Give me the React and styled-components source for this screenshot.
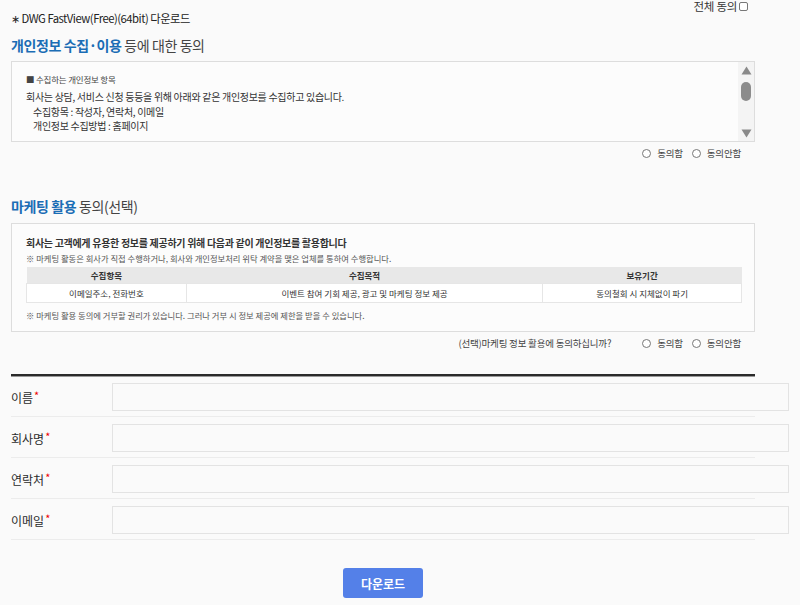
import React from "react";
import styled, { createGlobalStyle } from "styled-components";

const Global = createGlobalStyle`
  html, body { margin: 0; padding: 0; background: #fafafa; }
  body { font-family: "Noto Sans CJK KR", "Noto Sans", sans-serif; color: #333; overflow: hidden; }
  * { box-sizing: border-box; }
`;

const Page = styled.div`
  width: 800px;
  height: 605px;
  padding: 0 0 0 11px;
  overflow: hidden;
`;

const Container = styled.div`
  width: 744px;
`;

const TopBar = styled.div`
  display: flex;
  justify-content: flex-end;
  align-items: center;
  gap: 2px;
  height: 12px;
  padding-right: 7px;
  font-size: 11.5px;
  line-height: 12px;
  letter-spacing: -0.3px;
  color: #333;
`;

const Check = styled.span`
  display: inline-block;
  width: 9px;
  height: 9px;
  border: 1px solid #777;
  border-radius: 2px;
  background: #fff;
`;

const FileTitle = styled.div`
  margin-top: -2px;
  font-size: 11.3px;
  line-height: 16px;
  letter-spacing: -0.5px;
  color: #222;
`;

const Heading = styled.h2`
  margin: 9px 0 0;
  font-size: 14px;
  line-height: 20px;
  letter-spacing: -0.4px;
  font-weight: 400;
  color: #444;
  b { color: #1b6db5; font-weight: 700; }
`;

const ScrollBox = styled.div`
  margin-top: 6px;
  height: 81px;
  border: 1px solid #ddd;
  background: #fcfcfc;
  display: flex;
`;

const ScrollContent = styled.div`
  flex: 1;
  overflow: hidden;
  padding: 10px 14px 0;
`;

const Scrollbar = styled.div`
  width: 16px;
  flex: none;
  background: #f4f4f4;
  display: flex;
  flex-direction: column;
  align-items: center;
  padding: 4px 0 3px;
`;

const Thumb = styled.div`
  margin-top: 7px;
  width: 10px;
  height: 19px;
  border-radius: 5px;
  background: #8c8c8c;
`;

const Spacer = styled.div`
  flex: 1;
`;

const SmallTitle = styled.div`
  font-size: 8.5px;
  line-height: 14px;
  letter-spacing: -0.2px;
  color: #444;
`;

const BodyText = styled.div`
  font-size: 10px;
  line-height: ${p => p.$lh || 15}px;
  letter-spacing: -0.3px;
  color: #333;
  white-space: nowrap;
  padding-left: ${p => p.$indent || 0}px;
  margin-top: ${p => p.$mt || 0}px;
`;

const RadioRow = styled.div`
  display: flex;
  justify-content: flex-end;
  align-items: center;
  gap: 9px;
  margin-top: ${p => p.$mt || 3}px;
  padding-right: 14px;
  height: 16px;
  font-size: 9.5px;
  line-height: 16px;
  letter-spacing: -0.2px;
  color: #444;
`;

const RadioLabel = styled.label`
  display: flex;
  align-items: center;
  gap: 6px;
`;

const Circle = styled.span`
  display: inline-block;
  width: 9px;
  height: 9px;
  border: 1px solid #777;
  border-radius: 50%;
  background: #fff;
`;

const Question = styled.span`
  margin-right: 22px;
`;

const MarketingHeading = styled(Heading)`
  margin-top: 35px;
`;

const InfoBox = styled.div`
  margin-top: 7px;
  border: 1px solid #ddd;
  background: #fcfcfc;
  padding: 11px 14px 9px;
`;

const Lead = styled.div`
  font-size: 10px;
  line-height: 16px;
  letter-spacing: -0.3px;
  font-weight: 700;
  color: #333;
`;

const Note = styled.div`
  font-size: 8.3px;
  line-height: 14px;
  color: #555;
  margin-top: ${p => p.$mt || 0}px;
`;

const Table = styled.table`
  margin-top: 2px;
  width: 716px;
  border-collapse: collapse;
  font-size: 8.5px;
  color: #333;
  th {
    background: #e8e8e8;
    font-weight: 700;
    height: 16px;
    padding: 0;
    line-height: 16px;
  }
  td {
    background: #fff;
    height: 19px;
    padding: 0;
    line-height: 17px;
    text-align: center;
    border: 1px solid #e6e6e6;
  }
`;

const Divider = styled.div`
  margin-top: 23px;
  height: 2px;
  background: #2a2a2a;
  box-shadow: 0 1px 0 #999;
`;

const FormRow = styled.div`
  display: flex;
  align-items: center;
  height: 41px;
  padding-top: 1px;
  border-bottom: 1px solid #ececec;
`;

const FieldLabel = styled.div`
  width: 101px;
  flex: none;
  font-size: 12px;
  color: #2b2b2b;
  i { color: #e00; font-style: normal; font-size: 11px; vertical-align: 3px; margin-left: 1px; }
`;

const Input = styled.input`
  flex: none;
  width: 677px;
  height: 28px;
  border: 1px solid #e3e3e3;
  background: #fafafa;
  outline: none;
`;

const ButtonWrap = styled.div`
  display: flex;
  justify-content: center;
  margin-top: 28px;
`;

const Button = styled.button`
  width: 80px;
  height: 30px;
  border: none;
  border-radius: 3px;
  background: #5480e8;
  color: #fff;
  font-family: "Noto Sans CJK KR", sans-serif;
  font-size: 12px;
  font-weight: 700;
`;

const ArrowUp = () => (
  <svg width="11" height="9" viewBox="0 0 11 9"><path d="M5.5 0.5 L10.5 8.5 L0.5 8.5 Z" fill="#8a8a8a" /></svg>
);
const ArrowDown = () => (
  <svg width="11" height="9" viewBox="0 0 11 9"><path d="M0.5 0.5 L10.5 0.5 L5.5 8.5 Z" fill="#8a8a8a" /></svg>
);

const fields = ["이름", "회사명", "연락처", "이메일"];

export default function App() {
  return (
    <Page>
      <Global />
      <Container>
        <TopBar>전체 동의<Check /></TopBar>
        <FileTitle>∗ DWG FastView(Free)(64bit) 다운로드</FileTitle>
        <Heading><b>개인정보 수집·이용</b> 등에 대한 동의</Heading>
        <ScrollBox>
          <ScrollContent>
            <SmallTitle>■ 수집하는 개인정보 항목</SmallTitle>
            <BodyText $mt={2} $lh={17}>회사는 상담, 서비스 신청 등등을 위해 아래와 같은 개인정보를 수집하고 있습니다.</BodyText>
            <BodyText $indent={7} $lh={14}>수집항목 : 작성자, 연락처, 이메일</BodyText>
            <BodyText $indent={7} $lh={14}>개인정보 수집방법 : 홈페이지</BodyText>
          </ScrollContent>
          <Scrollbar>
            <ArrowUp />
            <Thumb />
            <Spacer />
            <ArrowDown />
          </Scrollbar>
        </ScrollBox>
        <RadioRow>
          <RadioLabel><Circle />동의함</RadioLabel>
          <RadioLabel><Circle />동의안함</RadioLabel>
        </RadioRow>
        <MarketingHeading><b>마케팅 활용</b> 동의(선택)</MarketingHeading>
        <InfoBox>
          <Lead>회사는 고객에게 유용한 정보를 제공하기 위해 다음과 같이 개인정보를 활용합니다</Lead>
          <Note>※ 마케팅 활동은 회사가 직접 수행하거나, 회사와 개인정보처리 위탁 계약을 맺은 업체를 통하여 수행합니다.</Note>
          <Table>
            <colgroup>
              <col style={{ width: 160 }} />
              <col style={{ width: 357 }} />
              <col style={{ width: 199 }} />
            </colgroup>
            <thead>
              <tr><th>수집항목</th><th>수집목적</th><th>보유기간</th></tr>
            </thead>
            <tbody>
              <tr>
                <td>이메일주소, 전화번호</td>
                <td>이벤트 참여 기회 제공, 광고 및 마케팅 정보 제공</td>
                <td>동의철회 시 지체없이 파기</td>
              </tr>
            </tbody>
          </Table>
          <Note $mt={5}>※ 마케팅 활용 동의에 거부할 권리가 있습니다. 그러나 거부 시 정보 제공에 제한을 받을 수 있습니다.</Note>
        </InfoBox>
        <RadioRow $mt={3}>
          <Question>(선택)마케팅 정보 활용에 동의하십니까?</Question>
          <RadioLabel><Circle />동의함</RadioLabel>
          <RadioLabel><Circle />동의안함</RadioLabel>
        </RadioRow>
        <Divider />
        {fields.map(f => (
          <FormRow key={f}>
            <FieldLabel>{f}<i>*</i></FieldLabel>
            <Input type="text" />
          </FormRow>
        ))}
        <ButtonWrap>
          <Button>다운로드</Button>
        </ButtonWrap>
      </Container>
    </Page>
  );
}
